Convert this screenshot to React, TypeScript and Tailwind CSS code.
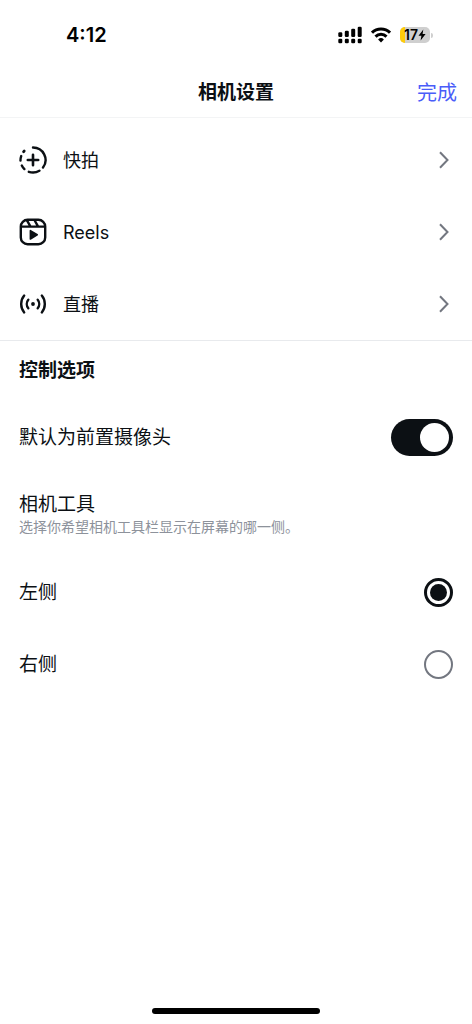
import { useState } from "react";
import type { ReactNode } from "react";

const SIDES = [
  { value: "left", label: "左侧" },
  { value: "right", label: "右侧" },
];

function SignalIcon() {
  return (
    <svg width="24" height="18" viewBox="0 0 24 18" aria-hidden="true">
      <rect x="0.3" y="6.2" width="4" height="4.8" rx="1.3" />
      <rect x="6.8" y="4.8" width="4" height="6.2" rx="1.3" />
      <rect x="13.2" y="2.8" width="4" height="8.2" rx="1.3" />
      <rect x="19.7" y="0.8" width="4" height="10.2" rx="1.3" />
      <rect x="0.3" y="12.8" width="4" height="4.4" rx="1.3" />
      <rect x="6.8" y="12.8" width="4" height="4.4" rx="1.3" />
      <rect x="13.2" y="12.8" width="4" height="4.4" rx="1.3" />
      <rect x="19.7" y="12.8" width="4" height="4.4" rx="1.3" />
    </svg>
  );
}

function WifiIcon() {
  return (
    <svg width="20" height="16" viewBox="0 0 20 16" fill="none" stroke="black" strokeWidth="3" aria-hidden="true">
      <path d="M1 5.7a12.7 12.7 0 0 1 18 0" />
      <path d="M4.5 9.6a7.8 7.8 0 0 1 11 0" />
      <path d="M10 15.4 7.1 12.5a4.1 4.1 0 0 1 5.8 0Z" fill="black" stroke="none" />
    </svg>
  );
}

function Battery({ level }: { level: number }) {
  return (
    <div className="flex items-center gap-px">
      <div className="relative flex h-4 w-[30px] items-center justify-center overflow-hidden rounded-[5px] bg-[#cfcfcf]">
        <span className="absolute inset-y-0 left-0 bg-[#ffcc0a]" style={{ width: `${level}%` }} />
        <span className="relative text-sm leading-4 font-semibold">{level}</span>
        <svg className="relative" width="8" height="12" viewBox="0 0 8 12" aria-hidden="true">
          <path d="M5.3.6.5 6.7h2.9L2.6 11.4 7.6 5.1H4.6Z" />
        </svg>
      </div>
      <span className="h-[5px] w-[2px] rounded-r-full bg-[#cfcfcf]" />
    </div>
  );
}

function StoryIcon() {
  return (
    <svg width="28" height="28" viewBox="0 0 28 28" fill="none" stroke="currentColor" strokeWidth="2.4" strokeLinecap="round" aria-hidden="true">
      <path d="M14 1.5A12.5 12.5 0 0 1 24 21.5" />
      <path d="M20.4 24.7A12.5 12.5 0 0 1 9.8 25.8" />
      <path d="M5.4 23.1A12.5 12.5 0 0 1 2.8 19.5" />
      <path d="M1.5 14.6A12.5 12.5 0 0 1 2.2 10.1" />
      <path d="M4.6 5.7 5.2 5.1" strokeWidth="2.8" />
      <path d="M14 8.8v10.4M8.8 14h10.4" strokeWidth="2.6" />
    </svg>
  );
}

function ReelsIcon() {
  return (
    <svg width="28" height="28" viewBox="0 0 28 28" fill="none" stroke="currentColor" strokeWidth="2.4" aria-hidden="true">
      <rect x="1.8" y="1.8" width="24.4" height="24.4" rx="6.8" />
      <path d="M2 8.6h24M7.8 2.2l3.6 6.2M15.4 2l3.6 6.4" />
      <path d="M10.6 12.6v8.4a.8.8 0 0 0 1.2.7l6.8-4.2a.8.8 0 0 0 0-1.4l-6.8-4.2a.8.8 0 0 0-1.2.7Z" fill="currentColor" stroke="none" />
    </svg>
  );
}

function LiveIcon() {
  return (
    <svg width="28" height="28" viewBox="0 0 28 28" fill="none" stroke="currentColor" strokeWidth="2.4" strokeLinecap="round" aria-hidden="true">
      <path d="M5.2 5.6a13.2 13.2 0 0 0 0 16.8M22.8 5.6a13.2 13.2 0 0 1 0 16.8" />
      <path d="M9.3 9.8a6.6 6.6 0 0 0 0 8.4M18.7 9.8a6.6 6.6 0 0 1 0 8.4" />
      <circle cx="14" cy="14" r="1.9" fill="currentColor" stroke="none" />
    </svg>
  );
}

function LinkRow({ icon, label }: { icon: ReactNode; label: string }) {
  return (
    <a href="#" className="flex h-[72px] items-center gap-4 pr-[23px] pl-[19px]">
      {icon}
      <span className="flex-1 pt-0.5 text-lg">{label}</span>
      <svg width="10" height="18" viewBox="0 0 10 18" fill="none" stroke="#737780" strokeWidth="2" aria-hidden="true">
        <path d="M1 1.3 8.5 9 1 16.7" />
      </svg>
    </a>
  );
}

export default function App() {
  const [frontCamera, setFrontCamera] = useState(true);
  const [side, setSide] = useState("left");

  return (
    <div className="flex min-h-screen flex-col bg-white font-[Inter,'Noto_Sans_CJK_SC',sans-serif] text-[19px] leading-7 text-[#0c1014]">
      <div className="flex h-[66px] items-center justify-between pt-1 pr-[39px] pl-[66px] text-black">
        <span className="text-xl font-semibold">4:12</span>
        <div className="flex items-center gap-[9px]">
          <SignalIcon />
          <WifiIcon />
          <Battery level={17} />
        </div>
      </div>

      <header className="grid h-[52px] grid-cols-[1fr_auto_1fr] items-center border-b border-[#f3f4f5] px-[15px] pt-0.5">
        <h1 className="col-start-2 font-bold">相机设置</h1>
        <button type="button" className="justify-self-end text-xl text-[#4a5df9]">
          完成
        </button>
      </header>

      <main>
        <nav className="border-b border-[#e8eaed] pt-1.5">
          <LinkRow icon={<StoryIcon />} label="快拍" />
          <LinkRow icon={<ReelsIcon />} label="Reels" />
          <LinkRow icon={<LiveIcon />} label="直播" />
        </nav>

        <section className="px-[19px] pt-4">
          <h2 className="font-bold">控制选项</h2>

          <label className="mt-4 flex h-[72px] items-center justify-between">
            <span className="pt-0.5">默认为前置摄像头</span>
            <input
              type="checkbox"
              role="switch"
              checked={frontCamera}
              onChange={(e) => setFrontCamera(e.target.checked)}
              className="flex h-[37px] w-[62px] appearance-none items-center rounded-full bg-[#c7cbd1] px-1 before:size-[29px] before:rounded-full before:bg-white checked:justify-end checked:bg-[#0c1014]"
            />
          </label>

          <fieldset className="pt-[18px]">
            <legend className="contents">相机工具</legend>
            <p className="text-sm leading-4 text-[#8d929b]">选择你希望相机工具栏显示在屏幕的哪一侧。</p>
            <div className="pt-[21px]">
              {SIDES.map(({ value, label }) => (
                <label key={value} className="flex h-[72px] items-center justify-between">
                  <span className="pt-0.5">{label}</span>
                  <input
                    type="radio"
                    name="toolbar-side"
                    value={value}
                    checked={side === value}
                    onChange={() => setSide(value)}
                    className="grid size-[29px] appearance-none place-items-center rounded-full border-2 border-[#737780] checked:border-3 checked:border-[#0c1014] checked:before:size-[17px] checked:before:rounded-full checked:before:bg-[#0c1014]"
                  />
                </label>
              ))}
            </div>
          </fieldset>
        </section>
      </main>

      <div className="mx-auto mt-auto mb-2.5 h-1.5 w-[168px] rounded-full bg-black" />
    </div>
  );
}
